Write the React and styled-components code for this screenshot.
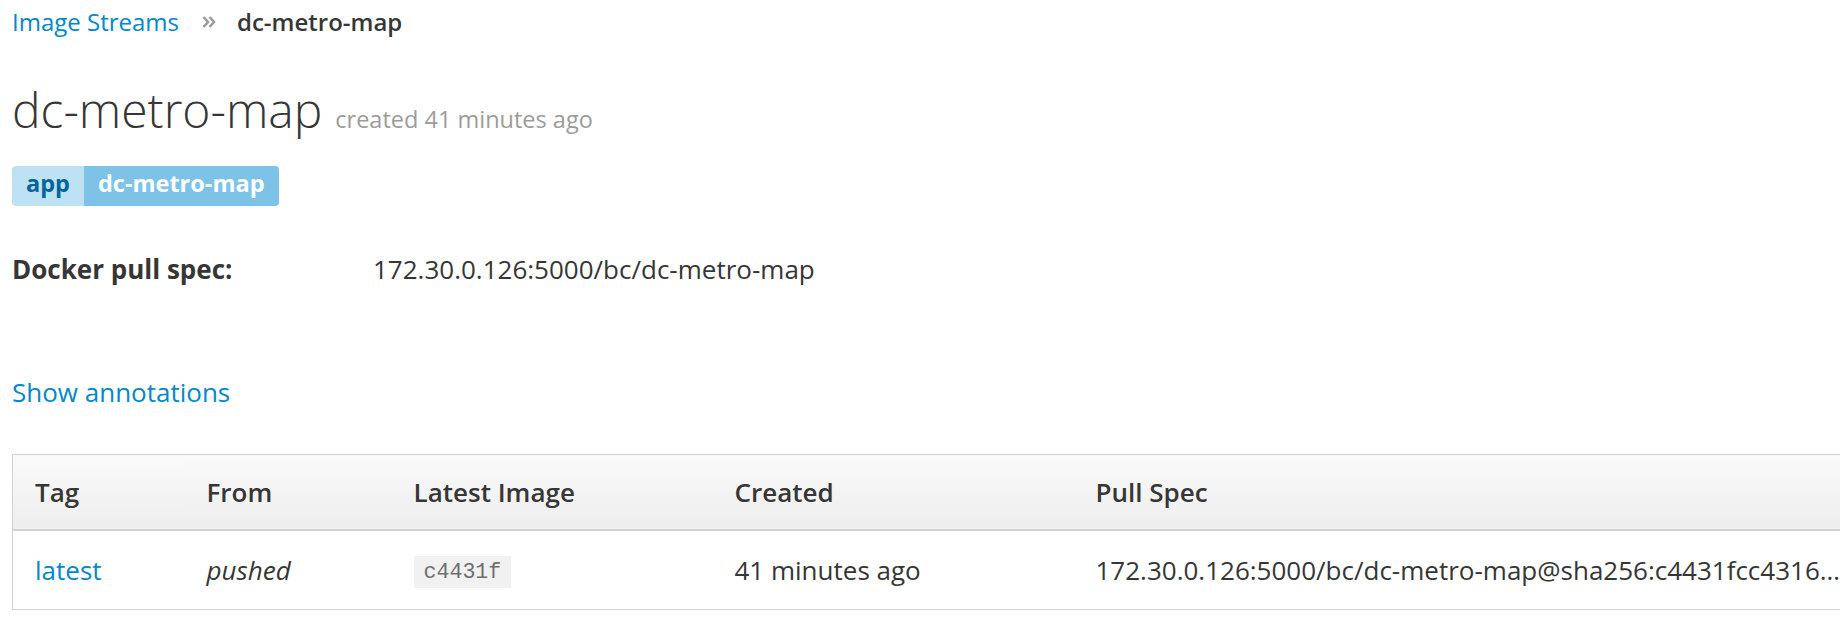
import React from "react";
import styled, { createGlobalStyle } from "styled-components";

const GlobalStyle = createGlobalStyle`
  html, body {
    margin: 0;
    padding: 0;
    background: #ffffff;
    overflow: hidden;
  }
  body {
    font-family: "Open Sans", "Liberation Sans", sans-serif;
    font-size: 26px;
    color: #363636;
  }
  * { box-sizing: border-box; }
`;

const Page = styled.div`
  width: 1840px;
  height: 640px;
  padding: 2px 0 0 12px;
  overflow: hidden;
`;

const Breadcrumb = styled.nav`
  display: flex;
  align-items: center;
  height: 40px;
  line-height: 40px;
  font-size: 24px;
`;

const Crumb = styled.a`
  color: ${(p) => (p.$active ? "#363636" : "#0088ce")};
  font-weight: ${(p) => (p.$active ? 600 : 400)};
  text-decoration: none;
`;

const Separator = styled.span`
  display: inline-flex;
  align-items: center;
  margin: 0 21px 0 23px;
`;

const Title = styled.h1`
  margin: 42px 0 0;
  font-size: 48px;
  font-weight: 300;
  line-height: 52.8px;
  color: #363636;
`;

const Small = styled.small`
  margin-left: 13px;
  font-size: 23.5px;
  font-weight: 400;
  line-height: 24px;
  color: #9c9c9c;
`;

const Labels = styled.div`
  display: flex;
  margin-top: 29px;
  height: 40px;
`;

const LabelPart = styled.span`
  display: inline-block;
  height: 40px;
  line-height: 35px;
  padding: 0 14px 5px;
  font-size: 23.5px;
  font-weight: 700;
  background: ${(p) => (p.$value ? "#7dc3e8" : "#bee1f4")};
  color: ${(p) => (p.$value ? "#ffffff" : "#00659c")};
  border-radius: ${(p) => (p.$value ? "0 4px 4px 0" : "4px 0 0 4px")};
`;

const DetailList = styled.dl`
  display: grid;
  grid-template-columns: 361px auto;
  margin: 43px 0 0;
  line-height: 40px;
`;

const Term = styled.dt`
  font-weight: 700;
  margin: 0;
`;

const Desc = styled.dd`
  margin: 0;
`;

const AnnotLink = styled.a`
  display: block;
  margin-top: 83px;
  line-height: 40px;
  color: #0088ce;
  text-decoration: none;
  width: max-content;
`;

const Table = styled.table`
  margin-top: 42px;
  border-collapse: collapse;
  table-layout: fixed;
  width: 1861px;
  border: 1px solid #d1d1d1;
`;

const HeadCell = styled.th`
  width: ${(p) => p.$w}px;
  text-align: left;
  font-weight: 600;
  padding: 17px 22px;
  line-height: 40px;
  height: 74px;
  background: linear-gradient(to bottom, #fafafa 0%, #ededed 100%);
  border-bottom: 2px solid #d1d1d1;
`;

const Cell = styled.td`
  padding: 17px 22px;
  line-height: 40px;
  height: 74px;
  white-space: nowrap;
  overflow: hidden;
  text-overflow: ellipsis;
  font-style: ${(p) => (p.$italic ? "italic" : "normal")};
`;

const TagLink = styled.a`
  color: #0088ce;
  text-decoration: none;
`;

const Code = styled.code`
  font-family: "Liberation Mono", "DejaVu Sans Mono", monospace;
  font-size: 21.6px;
  color: #6f6f6f;
  background: #f1f1f1;
  padding: 4px 10px;
  border-radius: 1px;
`;

const DoubleAngle = () => (
  <svg width="14" height="14" viewBox="0 0 14 14" aria-hidden="true">
    <path d="M1.5 2 L6 7 L1.5 12" fill="none" stroke="#9c9c9c" strokeWidth="2.6" />
    <path d="M7.5 2 L12 7 L7.5 12" fill="none" stroke="#9c9c9c" strokeWidth="2.6" />
  </svg>
);

const columns = [
  { key: "tag", label: "Tag", w: 172 },
  { key: "from", label: "From", w: 207 },
  { key: "image", label: "Latest Image", w: 321 },
  { key: "created", label: "Created", w: 361 },
  { key: "spec", label: "Pull Spec", w: 800 },
];

export default function App() {
  return (
    <>
      <GlobalStyle />
      <Page>
        <Breadcrumb>
          <Crumb href="#">Image Streams</Crumb>
          <Separator>
            <DoubleAngle />
          </Separator>
          <Crumb $active>dc-metro-map</Crumb>
        </Breadcrumb>

        <Title>
          dc-metro-map
          <Small>created 41 minutes ago</Small>
        </Title>

        <Labels>
          <LabelPart>app</LabelPart>
          <LabelPart $value>dc-metro-map</LabelPart>
        </Labels>

        <DetailList>
          <Term>Docker pull spec:</Term>
          <Desc>172.30.0.126:5000/bc/dc-metro-map</Desc>
        </DetailList>

        <AnnotLink href="#">Show annotations</AnnotLink>

        <Table>
          <thead>
            <tr>
              {columns.map((c) => (
                <HeadCell key={c.key} $w={c.w}>
                  {c.label}
                </HeadCell>
              ))}
            </tr>
          </thead>
          <tbody>
            <tr>
              <Cell>
                <TagLink href="#">latest</TagLink>
              </Cell>
              <Cell $italic>pushed</Cell>
              <Cell>
                <Code>c4431f</Code>
              </Cell>
              <Cell>41 minutes ago</Cell>
              <Cell>
                172.30.0.126:5000/bc/dc-metro-map@sha256:c4431fcc4316b2e4f5d6a7c8e9f0a1b2c3d4e5f6
              </Cell>
            </tr>
          </tbody>
        </Table>
      </Page>
    </>
  );
}
